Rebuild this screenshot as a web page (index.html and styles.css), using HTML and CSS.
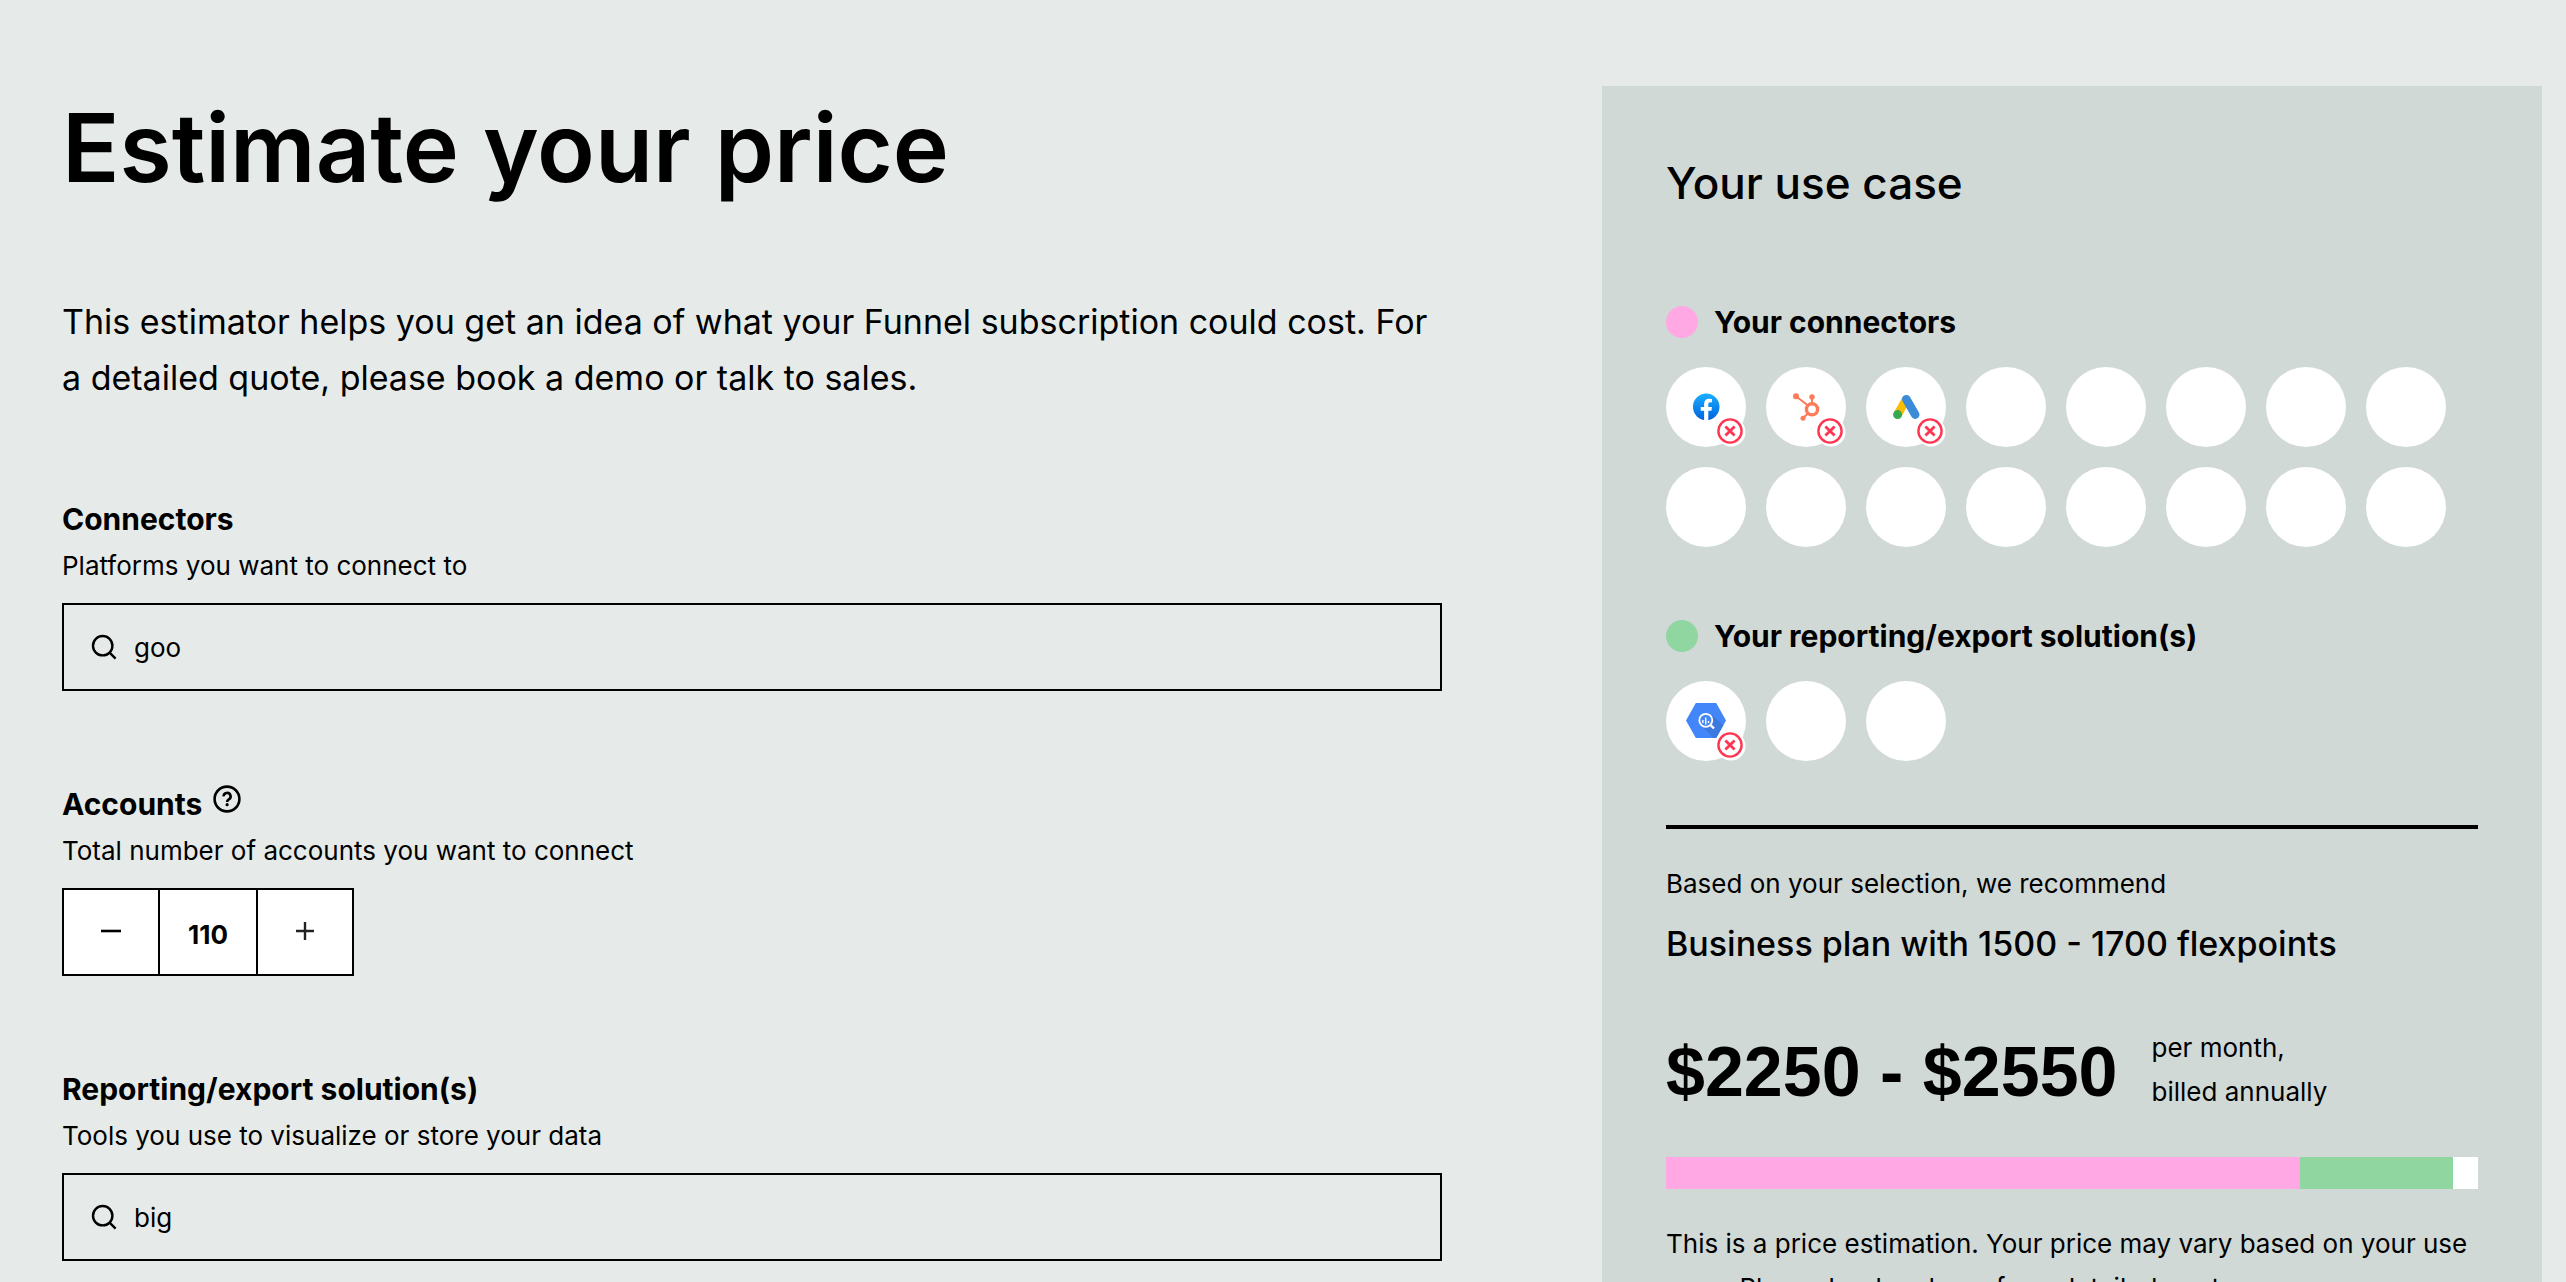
FILE: index.html
```html
<!DOCTYPE html>
<html lang="en">
<head>
    <meta charset="UTF-8">
    <meta name="viewport" content="width=device-width, initial-scale=1.0">
    <title>Estimate your price</title>
    <link rel="stylesheet" href="styles.css">
</head>
<body>
    <!-- Icons used more than once -->
    <svg class="sprite" aria-hidden="true">
        <symbol id="search" viewBox="0 0 28 28">
            <circle cx="12.7" cy="12.7" r="9.7" fill="none" stroke="#000" stroke-width="2.4"/>
            <path d="M19.6 19.6L25.6 25.6" stroke="#000" stroke-width="2.4"/>
        </symbol>
        <symbol id="remove" viewBox="0 0 30 30">
            <circle cx="15" cy="15" r="14.5" fill="#fff"/>
            <circle cx="14" cy="14" r="11.6" fill="none" stroke="#ff3651" stroke-width="2.4"/>
            <path d="M9.4 9.4L18.6 18.6M18.6 9.4L9.4 18.6" stroke="#ff3651" stroke-width="2.8"/>
        </symbol>
    </svg>

    <div class="page">
        <main class="form">
            <h1>Estimate your price</h1>
            <p class="intro">This estimator helps you get an idea of what your Funnel subscription could cost. For a detailed quote, please book a demo or talk to sales.</p>

            <div class="field">
                <label class="label" for="connectors">Connectors</label>
                <p class="hint">Platforms you want to connect to</p>
                <div class="search">
                    <svg class="search-icon"><use href="#search"/></svg>
                    <input type="text" id="connectors" value="goo">
                </div>
            </div>

            <div class="field">
                <div class="label-row">
                    <label class="label" for="accounts">Accounts</label>
                    <button class="help" type="button" aria-label="About accounts">
                        <svg viewBox="0 0 28 28">
                            <circle cx="14" cy="14" r="12.4" fill="none" stroke="#000" stroke-width="2.6"/>
                            <path d="M10.6 11.4a3.5 3.4 0 1 1 5.2 2.9c-1.2.8-1.7 1.3-1.7 2.6" fill="none" stroke="#000" stroke-width="2.6"/>
                            <circle cx="14.1" cy="19.7" r="1.6"/>
                        </svg>
                    </button>
                </div>
                <p class="hint">Total number of accounts you want to connect</p>
                <div class="stepper">
                    <button type="button" aria-label="Fewer accounts">
                        <svg viewBox="0 0 20 20"><path d="M0 10H20" stroke="#000" stroke-width="2.6"/></svg>
                    </button>
                    <input type="text" id="accounts" value="110">
                    <button type="button" aria-label="More accounts">
                        <svg viewBox="0 0 20 20"><path d="M1 10H19M10 1V19" stroke="#222" stroke-width="2.4"/></svg>
                    </button>
                </div>
            </div>

            <div class="field">
                <label class="label" for="solutions">Reporting/export solution(s)</label>
                <p class="hint">Tools you use to visualize or store your data</p>
                <div class="search">
                    <svg class="search-icon"><use href="#search"/></svg>
                    <input type="text" id="solutions" value="big">
                </div>
            </div>
        </main>

        <aside class="summary">
            <h2>Your use case</h2>

            <h3><span class="dot pink"></span>Your connectors</h3>
            <div class="slots">
                <div class="slot">
                    <svg class="logo" viewBox="0 0 80 80">
                        <defs>
                            <linearGradient id="fb" x1="0" y1="0" x2="0" y2="1">
                                <stop offset="0" stop-color="#19afff"/>
                                <stop offset="1" stop-color="#0062e0"/>
                            </linearGradient>
                        </defs>
                        <circle cx="40.2" cy="39.8" r="13.3" fill="url(#fb)"/>
                        <path d="M38.1 53.4V43.8H34.7V39.9H38.1V37C38.1 33.6 40.1 31.8 43.1 31.8C44.6 31.8 46 32.1 46 32.1V35.3H44.4C42.8 35.3 42.3 36.3 42.3 37.4V39.9H46L45.4 43.8H42.3V53.4Z" fill="#fff"/>
                    </svg>
                    <button class="remove" type="button" aria-label="Remove Facebook"><svg><use href="#remove"/></svg></button>
                </div>
                <div class="slot">
                    <svg class="logo" viewBox="0 0 80 80" stroke="#ff7a59" fill="none">
                        <path d="M30 29.3L42 38.5M46 30V37M41.8 46.5L37 51.3" stroke-width="2"/>
                        <circle cx="46" cy="42.3" r="5.6" stroke-width="3.4"/>
                        <g fill="#ff7a59" stroke="none">
                            <circle cx="30" cy="29.3" r="3"/>
                            <circle cx="46" cy="30" r="2.7"/>
                            <circle cx="37" cy="51.3" r="2.5"/>
                        </g>
                    </svg>
                    <button class="remove" type="button" aria-label="Remove HubSpot"><svg><use href="#remove"/></svg></button>
                </div>
                <div class="slot">
                    <svg class="logo" viewBox="0 0 80 80">
                        <path d="M40.3 32.2L31.6 47.6" stroke="#fbbc04" stroke-width="8.6"/>
                        <circle cx="31.6" cy="47.6" r="4.5" fill="#34a853"/>
                        <path d="M40.3 32.2L49.2 47.6" stroke="#3c8bd9" stroke-width="8.6" stroke-linecap="round"/>
                    </svg>
                    <button class="remove" type="button" aria-label="Remove Google Ads"><svg><use href="#remove"/></svg></button>
                </div>
                <div class="slot"></div>
                <div class="slot"></div>
                <div class="slot"></div>
                <div class="slot"></div>
                <div class="slot"></div>
                <div class="slot"></div>
                <div class="slot"></div>
                <div class="slot"></div>
                <div class="slot"></div>
                <div class="slot"></div>
                <div class="slot"></div>
                <div class="slot"></div>
                <div class="slot"></div>
            </div>

            <h3><span class="dot green"></span>Your reporting/export solution(s)</h3>
            <div class="slots">
                <div class="slot">
                    <svg class="logo" viewBox="0 0 80 80">
                        <path d="M29.8 22H50.2L60 39.5L50.2 57H29.8L20 39.5Z" fill="#4386fa"/>
                        <path d="M46 34L57.4 44.2L50.2 57H47.6L36 45.4Z" fill="#3c79de"/>
                        <circle cx="39.8" cy="39.3" r="6.5" fill="#4386fa" stroke="#fff" stroke-width="1.8"/>
                        <path d="M44.6 44.1L48 47.5" stroke="#fff" stroke-width="2.4"/>
                        <path d="M36.9 39V42M39.7 36.5V43.6M42.5 40V42" stroke="#fff" stroke-width="1.4"/>
                    </svg>
                    <button class="remove" type="button" aria-label="Remove BigQuery"><svg><use href="#remove"/></svg></button>
                </div>
                <div class="slot"></div>
                <div class="slot"></div>
            </div>

            <div class="result">
                <p>Based on your selection, we recommend</p>
                <p class="plan">Business plan with 1500 - 1700 flexpoints</p>
                <div class="price-row">
                    <strong class="price">$2250 - $2550</strong>
                    <p>per month,<br>billed annually</p>
                </div>
                <div class="bar">
                    <div class="pink" style="width: 78.1%"></div>
                    <div class="green" style="width: 18.8%"></div>
                </div>
                <p>This is a price estimation. Your price may vary based on your use case. Please book a demo for a detailed quote.</p>
            </div>
        </aside>
    </div>
</body>
</html>
```
FILE: styles.css
```css
* {
    box-sizing: border-box;
}

body {
    margin: 0;
    height: 100vh;
    overflow: hidden;
    background-color: #e6ebe9;
    color: #000;
    font-family: Inter, "Liberation Sans", sans-serif;
    font-size: 26px;
    line-height: 44px;
}

h1, h2, h3, p {
    margin: 0;
}

button, input {
    font: inherit;
    color: inherit;
    border: none;
    padding: 0;
}

button {
    background: none;
    cursor: pointer;
}

.sprite {
    display: none;
}

.page {
    display: grid;
    grid-template-columns: 1380fr 940fr;
    gap: 160px;
    padding: 86px 24px 0 62px;
}

/* Form column */
.form h1 {
    font-size: 95px;
    line-height: 124px;
    font-weight: 600;
}

.intro {
    margin-top: 84px;
    font-size: 34px;
    line-height: 56px;
}

.field {
    margin-top: 89px;
}

.label-row {
    display: flex;
    gap: 11px;
}

.label {
    display: block;
    font-size: 30px;
    line-height: 48px;
    font-weight: 700;
}

.hint {
    line-height: 46px;
}

.help {
    height: 28px;
    margin-top: 5px;
}

.help svg {
    display: block;
    width: 28px;
    height: 28px;
}

.search {
    display: flex;
    align-items: center;
    gap: 16px;
    height: 88px;
    margin-top: 14px;
    padding: 0 26px;
    border: 2px solid #000;
}

.search-icon {
    width: 28px;
    height: 28px;
}

.search input {
    flex: 1;
    padding-top: 2px;
    background: none;
    outline: none;
}

.stepper {
    display: inline-flex;
    height: 88px;
    margin-top: 14px;
    border: 2px solid #000;
    background-color: #fff;
    vertical-align: top;
}

.stepper button {
    width: 94px;
}

.stepper input {
    width: 100px;
    padding-top: 6px;
    border: solid #000;
    border-width: 0 2px;
    font-weight: 700;
    text-align: center;
    outline: none;
}

.stepper svg {
    width: 20px;
    height: 20px;
}

/* Summary panel */
.summary {
    padding: 64px;
    background-color: #d0d9d6;
}

.summary h2 {
    margin-bottom: 81px;
    font-size: 44px;
    line-height: 66px;
    font-weight: 500;
}

.summary h3 {
    display: flex;
    align-items: center;
    gap: 16px;
    font-size: 30px;
    line-height: 50px;
    font-weight: 700;
}

.dot {
    width: 32px;
    height: 32px;
    border-radius: 50%;
}

.pink {
    background-color: #ffa8e3;
}

.green {
    background-color: #90d6a1;
}

.slots {
    display: flex;
    flex-wrap: wrap;
    gap: 20px;
    margin: 20px 0 64px;
}

.slot {
    position: relative;
    width: 80px;
    height: 80px;
    border-radius: 50%;
    background-color: #fff;
}

.logo {
    display: block;
    width: 80px;
    height: 80px;
}

/* Remove badge sits over the logo */
.remove {
    position: absolute;
    right: 0;
    bottom: 0;
    width: 30px;
    height: 30px;
}

.remove svg {
    display: block;
    width: 30px;
    height: 30px;
}

.result {
    padding-top: 33px;
    border-top: 4px solid #000;
}

.plan {
    margin-top: 14px;
    font-size: 34px;
    line-height: 48px;
    font-weight: 500;
}

.price-row {
    display: flex;
    align-items: center;
    gap: 34px;
    margin-top: 56px;
}

.price {
    padding-top: 4px;
    font-family: "Liberation Sans", sans-serif;
    font-size: 70px;
    line-height: 88px;
    font-weight: 700;
}

.bar {
    display: flex;
    height: 32px;
    margin: 41px 0 33px;
    background-color: #fff;
}
```
